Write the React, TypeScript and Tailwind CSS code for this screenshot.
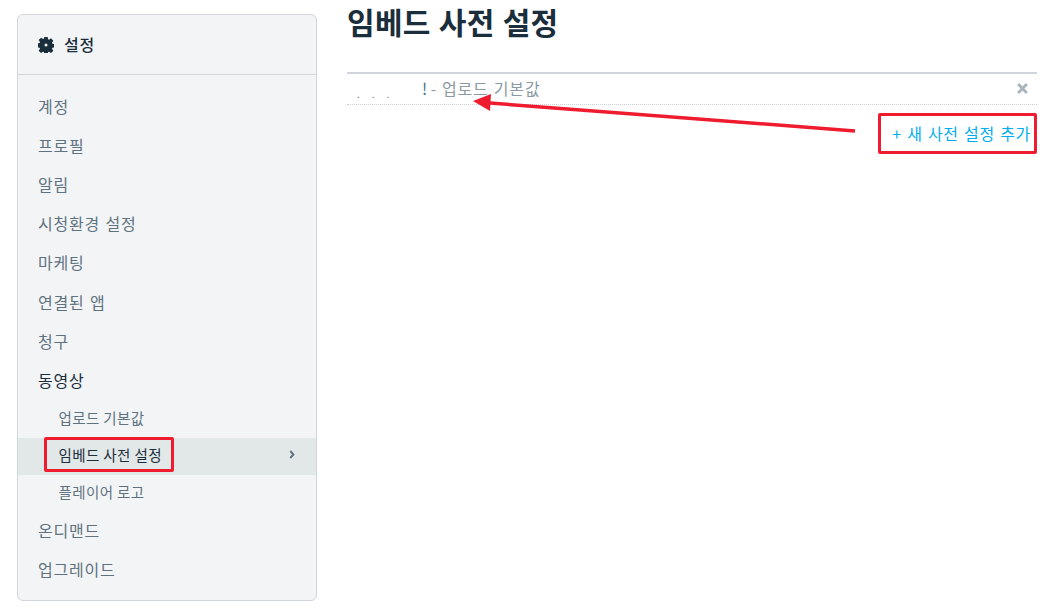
const topItems = ['계정', '프로필', '알림', '시청환경 설정', '마케팅', '연결된 앱', '청구'];
const subItems = [
  { label: '업로드 기본값', active: false },
  { label: '임베드 사전 설정', active: true },
  { label: '플레이어 로고', active: false },
];
const itemCls = "h-[39.2px] flex items-center pl-[20px] text-[16px] tracking-[0.8px] [word-spacing:1px]";

function Gear() {
  return (
    <svg viewBox="0 0 16 16" className="w-[16px] h-[16px] text-[#1a2e3b]" fill="currentColor">
      <path fillRule="evenodd" d="M6.3 0h3.4l.35 2.3 1 .42 1.9-1.38 2.4 2.4-1.38 1.9.42 1 2.3.35v3.4l-2.3.35-.42 1 1.38 1.9-2.4 2.4-1.9-1.38-1 .42-.35 2.3H6.3l-.35-2.3-1-.42-1.9 1.38-2.4-2.4 1.38-1.9-.42-1-2.3-.35V6.3l2.3-.35.42-1L.65 3.05l2.4-2.4 1.9 1.38 1-.42z M8 6.5a1.5 1.5 0 1 0 0 3 1.5 1.5 0 0 0 0-3z" />
    </svg>
  );
}

export default function App() {
  return (
    <div className="relative w-[1049px] h-[608px] bg-white overflow-hidden flex items-start gap-[30px] pl-[17px] pt-[14px] font-['Noto_Sans_CJK_KR','Liberation_Sans',sans-serif]">
      {/* Sidebar */}
      <aside className="w-[300px] h-[587px] shrink-0 bg-[#f2f4f6] border border-[#d0d6db] rounded-[6px] overflow-hidden">
        <div className="h-[60px] flex items-center gap-[10px] pl-[20px] border-b border-[#d0d6db]">
          <Gear />
          <span className="pb-[2px] text-[16px] tracking-[0.8px] font-medium text-[#1a2e3b]">설정</span>
        </div>
        <nav className="pt-[11px] flex flex-col">
          {topItems.map((t) => (
            <a key={t} className={`${itemCls} text-[#5f7280]`}>{t}</a>
          ))}
          <a className={`${itemCls} text-[#1a2e3b]`}>동영상</a>
          <div className="mt-[1px] -mb-[1px] flex flex-col">
            {subItems.map((s) => (
              <a key={s.label} className={`h-[37px] pb-[3px] flex items-center justify-between pl-[40.5px] pr-[20px] text-[14.5px] tracking-[0.4px] ${s.active ? 'bg-[#e2e7e8] text-[#1a2e3b]' : 'text-[#5f7280]'}`}>
                {s.label}
                {s.active && (
                  <svg viewBox="0 0 8 10" className="w-[7px] h-[9px] text-[#5f7280]" fill="none" stroke="currentColor" strokeWidth="2.2">
                    <path d="M1.5 1l3.5 4-3.5 4" />
                  </svg>
                )}
              </a>
            ))}
          </div>
          <a className={`${itemCls} text-[#5f7280]`}>온디맨드</a>
          <a className={`${itemCls} text-[#5f7280]`}>업그레이드</a>
        </nav>
      </aside>

      {/* Main */}
      <main className="w-[690px] -mt-[14px]">
        <h1 className="h-[72px] pt-[1px] text-[30px] leading-[40px] font-bold tracking-[0.3px] [word-spacing:1px] text-[#1a2e3b]">임베드 사전 설정</h1>
        <div className="border-t-2 border-[#d0d6db] border-b border-b-[#c9cfd3] [border-bottom-style:dotted] h-[33px] pb-[2px] flex items-center justify-between pr-[9px]">
          <div className="flex items-center text-[16px] tracking-[0.8px] [word-spacing:1px] text-[#8b9aa3]">
            <span className="w-[75px] pl-[10px] pt-[10px] text-[10px] tracking-[12px] text-[#5f7280]">...</span>
            <span className="tracking-[0px] [word-spacing:0px]"><span className="text-[#3f6f8f]">!</span> - <span className="ml-[2px] tracking-[0.8px] [word-spacing:1px]">업로드 기본값</span></span>
          </div>
          <svg viewBox="0 0 10 10" className="w-[11px] h-[11px] text-[#a9b5bc]" fill="none" stroke="currentColor" strokeWidth="2.6">
            <path d="M1 1l8 8M9 1l-8 8" />
          </svg>
        </div>
        <div className="flex justify-end pt-[16px] pr-[6px]">
          <a className="text-[16px] leading-[24px] tracking-[0.7px] [word-spacing:1px] text-[#00adef]">+ 새 사전 설정 추가</a>
        </div>
      </main>

      {/* Annotations */}
      <div className="absolute left-[44px] top-[437px] w-[130px] h-[35px] border-[3px] border-[#ee1c2e] rounded-[2px]" />
      <div className="absolute left-[878px] top-[113px] w-[159px] h-[41px] border-[3px] border-[#ee1c2e] rounded-[2px]" />
      <svg className="absolute left-0 top-0 w-[1049px] h-[608px] pointer-events-none" viewBox="0 0 1049 608">
        <path d="M855 131L490 103" stroke="#ee1c2e" strokeWidth="3.5" fill="none" />
        <path d="M473 101l18-7-1 17z" fill="#ee1c2e" />
      </svg>
    </div>
  );
}
